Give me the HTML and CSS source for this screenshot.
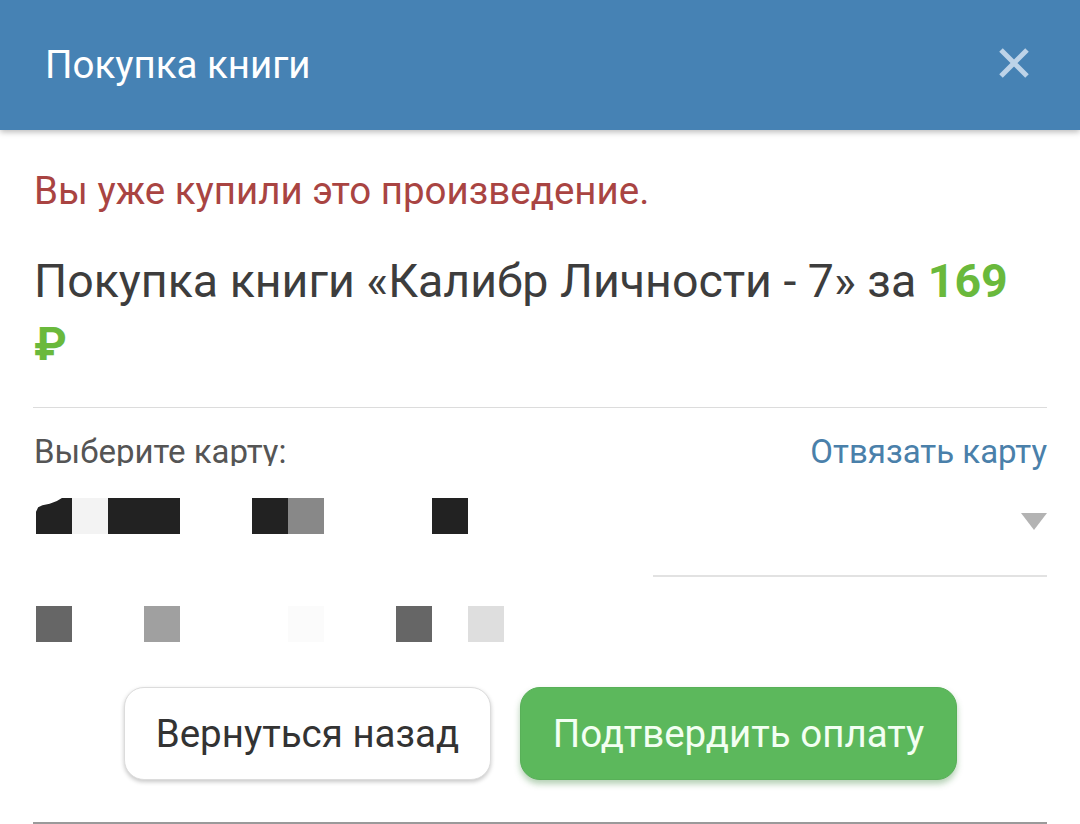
FILE: index.html
```html
<!DOCTYPE html>
<html lang="ru">
<head>
<meta charset="utf-8">
<title>Покупка книги</title>
<link rel="stylesheet" href="styles.css">
</head>
<body>
<header class="header">
  <h1 class="header-title">Покупка книги</h1>
  <button class="close" aria-label="Закрыть">
    <svg width="32" height="32" viewBox="0 0 32 32"><path d="M3 3 L29 29 M29 3 L3 29" stroke="#bdd3e8" stroke-width="5" stroke-linecap="butt"/></svg>
  </button>
</header>
<main class="content">
  <p class="error">Вы уже купили это произведение.</p>
  <p class="title">Покупка книги «Калибр Личности - 7» за <span class="price">169 ₽</span></p>
  <hr class="sep">
  <div class="card-head">
    <span class="card-label">Выберите карту:</span>
    <a class="unlink" href="#">Отвязать карту</a>
  </div>
  <div class="cards">
    <div class="mosaic">
      <span class="px c-dark curl r1 c1"></span>
      <span class="px c-f4 r1 c2"></span>
      <span class="px c-dark r1 c3"></span>
      <span class="px c-dark r1 c4"></span>
      <span class="px c-dark r1 c7"></span>
      <span class="px c-88 r1 c8"></span>
      <span class="px c-dark r1 c12"></span>
      <span class="px c-66 r4 c1"></span>
      <span class="px c-a0 r4 c4"></span>
      <span class="px c-fa r4 c8"></span>
      <span class="px c-66 r4 c11"></span>
      <span class="px c-dd r4 c13"></span>
    </div>
    <div class="select">
      <span class="caret"></span>
    </div>
  </div>
  <div class="actions">
    <button class="btn btn-back">Вернуться назад</button>
    <button class="btn btn-pay">Подтвердить оплату</button>
  </div>
  <hr class="bottom-line">
</main>
</body>
</html>
```

FILE: styles.css
```css
* { box-sizing: border-box; }
html, body { margin: 0; padding: 0; background: #fff; }
body {
  font-family: Roboto, "Noto Sans", sans-serif;
  width: 1080px;
  height: 824px;
  overflow: hidden;
}
.header {
  height: 130px;
  background: #4682b4;
  display: flex;
  align-items: center;
  justify-content: space-between;
  padding: 0 50px 2px 45px;
  box-shadow: 0 2px 6px rgba(0,0,0,0.28);
  position: relative;
  z-index: 1;
}
.header-title {
  margin: 0;
  font-size: 38.5px;
  font-weight: 400;
  color: #fff;
}
.close {
  background: none;
  border: 0;
  padding: 0;
  width: 32px;
  height: 32px;
  display: block;
  margin-bottom: 2px;
}
.close svg { display: block; }
.content {
  padding: 0 33px 0 34px;
}
.error {
  margin: 34px 0 0;
  font-size: 38.5px;
  line-height: 54px;
  color: #a94442;
}
.title {
  margin: 32px 0 0;
  font-size: 46.5px;
  line-height: 63px;
  color: #3d3d3d;
}
.price {
  color: #6ab93c;
  font-weight: 700;
}
.sep {
  margin: 31px 0 0 -1px;
  border: 0;
  border-top: 1px solid #dcdcdc;
  height: 0;
}
.card-head {
  margin-top: 23px;
  height: 35px;
  display: flex;
  justify-content: space-between;
  align-items: flex-start;
  font-size: 33px;
}
.card-label {
  display: block;
  height: 35px;
  line-height: 42px;
  overflow: hidden;
  color: #555;
}
.unlink {
  display: block;
  height: 35px;
  line-height: 42px;
  color: #4a80aa;
  text-decoration: none;
}
.cards {
  margin-top: 32px;
  display: flex;
  justify-content: space-between;
  align-items: flex-start;
}
.mosaic {
  margin-left: 2px;
  display: grid;
  grid-template-columns: repeat(13, 36px);
  grid-template-rows: repeat(4, 36px);
}
.px { display: block; }
.r1 { grid-row: 1; }
.r4 { grid-row: 4; }
.c1 { grid-column: 1; }
.c2 { grid-column: 2; }
.c3 { grid-column: 3; }
.c4 { grid-column: 4; }
.c7 { grid-column: 7; }
.c8 { grid-column: 8; }
.c11 { grid-column: 11; }
.c12 { grid-column: 12; }
.c13 { grid-column: 13; }
.c-dark { background: #222; }
.c-f4 { background: #f3f3f3; }
.c-88 { background: #888; }
.c-66 { background: #666; }
.c-a0 { background: #a0a0a0; }
.c-fa { background: #fbfbfb; }
.c-dd { background: #dedede; }
.curl { clip-path: polygon(0 38%, 6% 26%, 18% 20%, 38% 16%, 58% 8%, 72% 0, 100% 0, 100% 100%, 0 100%); }
.select {
  width: 394px;
  height: 79px;
  border-bottom: 2px solid #e2e2e2;
  display: flex;
  justify-content: flex-end;
  padding-top: 15px;
}
.caret {
  width: 0;
  height: 0;
  border-left: 13px solid transparent;
  border-right: 13px solid transparent;
  border-top: 17px solid #b3b3b3;
}
.actions {
  margin-top: 45px;
  display: flex;
  justify-content: center;
  gap: 29px;
}
.btn {
  height: 93px;
  border-radius: 20px;
  font-family: Roboto, "Noto Sans", sans-serif;
  font-size: 38.5px;
  padding: 0 20px;
  cursor: pointer;
}
.btn-back {
  width: 367px;
  background: #fff;
  color: #333;
  border: 1px solid #dcdcdc;
  box-shadow: 0 2px 4px rgba(0,0,0,0.22);
}
.btn-pay {
  width: 437px;
  background: #5cb85c;
  color: #f2fff2;
  border: 1px solid #58b058;
  box-shadow: 0 4px 6px rgba(40,120,40,0.35);
}
.bottom-line {
  margin: 42px 0 0 -1px;
  border: 0;
  border-top: 2px solid #9a9a9a;
  height: 0;
}
```
